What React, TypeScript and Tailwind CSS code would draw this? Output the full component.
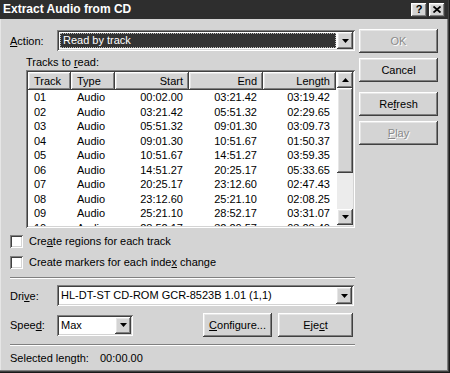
import React from "react";

const raised =
  "shadow-[inset_-1px_-1px_#404040,inset_1px_1px_#ffffff,inset_-2px_-2px_#808080,inset_2px_2px_#e6e6e6]";
const sunken =
  "shadow-[inset_1px_1px_#808080,inset_-1px_-1px_#ffffff,inset_2px_2px_#404040,inset_-2px_-2px_#d4d4d4]";

function Arrow({ up = false }: { up?: boolean }) {
  return (
    <svg width="7" height="4" viewBox="0 0 7 4" className={up ? "rotate-180" : ""}>
      <path d="M0 0h7L3.5 4z" fill="#000" />
    </svg>
  );
}

function DropBtn() {
  return (
    <div className={`w-[16px] h-[17px] bg-[#d4d4d4] ${raised} flex items-center justify-center shrink-0`}>
      <Arrow />
    </div>
  );
}

function U({ children }: { children: React.ReactNode }) {
  return <span className="underline underline-offset-[1px]">{children}</span>;
}

function Button({
  children,
  className = "",
  disabled = false,
}: {
  children: React.ReactNode;
  className?: string;
  disabled?: boolean;
}) {
  return (
    <div
      className={`h-[24px] bg-[#d4d4d4] ${raised} flex items-center justify-center ${
        disabled ? "text-[#8a8a8a] [text-shadow:1px_1px_#ffffff]" : "text-black"
      } ${className}`}
    >
      {children}
    </div>
  );
}

function Checkbox({ children }: { children: React.ReactNode }) {
  return (
    <div className="flex items-center h-[14px]">
      <div className={`w-[13px] h-[13px] bg-white ${sunken}`} />
      <span className="ml-[6px] leading-[14px]">{children}</span>
    </div>
  );
}

const rows = [
  ["01", "Audio", "00:02.00", "03:21.42", "03:19.42"],
  ["02", "Audio", "03:21.42", "05:51.32", "02:29.65"],
  ["03", "Audio", "05:51.32", "09:01.30", "03:09.73"],
  ["04", "Audio", "09:01.30", "10:51.67", "01:50.37"],
  ["05", "Audio", "10:51.67", "14:51.27", "03:59.35"],
  ["06", "Audio", "14:51.27", "20:25.17", "05:33.65"],
  ["07", "Audio", "20:25.17", "23:12.60", "02:47.43"],
  ["08", "Audio", "23:12.60", "25:21.10", "02:08.25"],
  ["09", "Audio", "25:21.10", "28:52.17", "03:31.07"],
  ["10", "Audio", "28:52.17", "32:20.57", "03:28.40"],
];

const colW = ["w-[43px]", "w-[44px]", "w-[74px]", "w-[74px]", "w-[73px]"];

export default function App() {
  return (
    <div className="w-[450px] h-[373px] bg-[#d4d4d4] font-['Liberation_Sans',Arial,sans-serif] text-[11px] text-black shadow-[inset_-1px_-1px_#1a1a1a,inset_-2px_-2px_#404040,inset_-3px_-3px_#808080,inset_1px_0_#e6e6e6] flex flex-col overflow-hidden">
      {/* Title bar */}
      <div className="h-[19px] bg-[#2e2e2e] flex items-center pl-[3px] pr-[3px] mr-[2px]">
        <span className="text-white font-bold text-[12px] leading-[19px]">Extract Audio from CD</span>
        <div className="ml-auto flex gap-[2px]">
          <div className={`w-[16px] h-[14px] bg-[#d4d4d4] ${raised} flex items-center justify-center font-bold text-[11px] leading-none`}>
            ?
          </div>
          <div className={`w-[16px] h-[14px] bg-[#d4d4d4] ${raised} flex items-center justify-center`}>
            <svg width="8" height="7" viewBox="0 0 8 7">
              <path d="M0.5 0.5L7.5 6.5M7.5 0.5L0.5 6.5" stroke="#000" strokeWidth="1.8" />
            </svg>
          </div>
        </div>
      </div>

      <div className="flex flex-1">
        {/* Left column */}
        <div className="pl-[10px] w-[355px] flex flex-col">
          {/* Action */}
          <div className="flex items-center h-[21px] mt-[11px]">
            <span className="w-[47px] leading-[14px]">
              <U>A</U>ction:
            </span>
            <div className={`w-[298px] h-[21px] bg-white ${sunken} flex items-center p-[2px]`}>
              <div className="flex-1 h-[15px] ml-[1px] mr-[1px] bg-[#333333] text-white leading-[15px] pl-[3px] outline-1 outline-dotted outline-[#bbbbbb] -outline-offset-1">
                Read by track
              </div>
              <DropBtn />
            </div>
          </div>

          {/* Tracks to read */}
          <div className="h-[19px] flex items-end pl-[16px]">
            <span className="leading-[14px] pb-[1px]">
              Tracks to <U>r</U>ead:
            </span>
          </div>

          {/* List */}
          <div className={`ml-[16px] w-[329px] h-[158px] bg-white ${sunken} p-[2px] flex overflow-hidden`}>
            <div className="flex-1 flex flex-col overflow-hidden">
              <div className="flex h-[18px] shrink-0">
                {["Track", "Type", "Start", "End", "Length"].map((h, i) => (
                  <div
                    key={h}
                    className={`${colW[i]} h-[18px] bg-[#d4d4d4] ${raised} leading-[18px] ${
                      i < 2 ? "pl-[6px]" : "text-right pr-[6px]"
                    }`}
                  >
                    {h}
                  </div>
                ))}
              </div>
              <div className="flex flex-col">
                {rows.map((r) => (
                  <div key={r[0]} className="flex h-[14.5px] leading-[14.5px] shrink-0">
                    {r.map((c, i) => (
                      <div
                        key={i}
                        className={`${colW[i]} ${i < 2 ? "pl-[6px]" : "text-right pr-[6px]"}`}
                      >
                        {c}
                      </div>
                    ))}
                  </div>
                ))}
              </div>
            </div>
            {/* Scrollbar */}
            <div className="w-[16px] bg-[#ececec] flex flex-col">
              <div className={`h-[16px] bg-[#d4d4d4] ${raised} flex items-center justify-center`}>
                <Arrow up />
              </div>
              <div className={`h-[85px] bg-[#d4d4d4] ${raised}`} />
              <div className="flex-1" />
              <div className={`h-[16px] bg-[#d4d4d4] ${raised} flex items-center justify-center mb-[1px]`}>
                <Arrow />
              </div>
            </div>
          </div>

          {/* Checkboxes */}
          <div className="mt-[6px]">
            <Checkbox>
              Cre<U>a</U>te regions for each track
            </Checkbox>
          </div>
          <div className="mt-[7px]">
            <Checkbox>
              Create markers for each inde<U>x</U> change
            </Checkbox>
          </div>

          {/* Separator */}
          <div className="mt-[8px] w-[345px] border-t border-t-[#808080] border-b border-b-white" />

          {/* Drive */}
          <div className="flex items-center h-[21px] mt-[6px]">
            <span className="w-[47px] leading-[14px]">
              Dri<U>v</U>e:
            </span>
            <div className={`w-[297px] h-[21px] bg-white ${sunken} flex items-center p-[2px]`}>
              <div className="flex-1 pl-[2px] leading-[15px]">HL-DT-ST CD-ROM GCR-8523B 1.01 (1,1)</div>
              <DropBtn />
            </div>
          </div>

          {/* Speed */}
          <div className="flex items-center h-[24px] mt-[7px]">
            <span className="w-[47px] leading-[14px]">
              Spee<U>d</U>:
            </span>
            <div className={`w-[76px] h-[21px] bg-white ${sunken} flex items-center p-[2px]`}>
              <div className="flex-1 pl-[2px] leading-[15px]">Max</div>
              <DropBtn />
            </div>
            <Button className="w-[69px] ml-[70px]">
              <span>
                <U>C</U>onfigure...
              </span>
            </Button>
            <Button className="w-[75px] ml-[6px]">
              <span>
                Eje<U>c</U>t
              </span>
            </Button>
          </div>

          {/* Separator */}
          <div className="mt-[7px] w-[345px] border-t border-t-[#808080] border-b border-b-white" />

          {/* Selected length */}
          <div className="flex h-[14px] mt-[5px] leading-[14px]">
            <span className="w-[90px]">Selected length:</span>
            <span>00:00.00</span>
          </div>
        </div>

        {/* Right column */}
        <div className="pl-[4px] flex flex-col pt-[10px]">
          <Button className="w-[79px]" disabled>
            OK
          </Button>
          <Button className="w-[79px] mt-[5px]">Cancel</Button>
          <Button className="w-[79px] mt-[10px]">
            <span>
              Re<U>f</U>resh
            </span>
          </Button>
          <Button className="w-[79px] mt-[5px]" disabled>
            <span>
              <U>P</U>lay
            </span>
          </Button>
        </div>
      </div>
    </div>
  );
}
